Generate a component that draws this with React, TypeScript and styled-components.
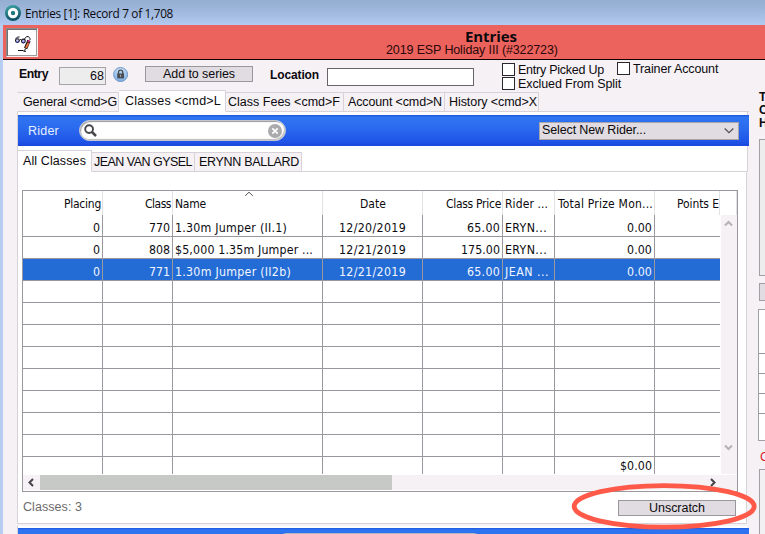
import React from 'react';
import styled, { createGlobalStyle, css } from 'styled-components';

const ARIAL = '"Liberation Sans", Arial, sans-serif';
const TAHOMA = '"DejaVu Sans Condensed", "DejaVu Sans", Tahoma, sans-serif';
const SEGOE = '"Open Sans", "Noto Sans", sans-serif';

const Global = createGlobalStyle`
  * { box-sizing: border-box; }
  html, body { margin: 0; padding: 0; overflow: hidden; }
  body { font-family: ${ARIAL}; font-size: 12.5px; color: #0c0a0e; }
`;

/* Labels are tracked so that each one occupies its designed width. */
const pen = document.createElement('canvas').getContext('2d')!;
const tracking = (text: string, font: string, width: number) => {
  pen.font = font;
  return (width - pen.measureText(text).width) / text.length;
};

const LabelText = styled.span<{ $ls: number; $size: number; $family: string; $bold: boolean; $color?: string; $drop: number }>`
  font-family: ${p => p.$family};
  font-size: ${p => p.$size}px;
  font-weight: ${p => (p.$bold ? 700 : 400)};
  letter-spacing: ${p => p.$ls.toFixed(3)}px;
  color: ${p => p.$color ?? 'inherit'};
  line-height: 13px;
  margin-top: ${p => p.$drop}px;
  margin-bottom: ${p => -p.$drop}px;
  white-space: pre;
  flex: none;
`;

type LabelProps = { text: string; w: number; size?: number; family?: string; bold?: boolean; color?: string; drop?: number };
const Label = ({ text, w, size = 12.5, family = ARIAL, bold = false, color, drop = 0 }: LabelProps) => (
  <LabelText
    $ls={tracking(text, `${bold ? 700 : 400} ${size}px ${family}`, w)}
    $size={size}
    $family={family}
    $bold={bold}
    $color={color}
    $drop={drop}
  >
    {text}
  </LabelText>
);

const Window = styled.div`
  position: relative;
  width: 765px;
  height: 534px;
  overflow: hidden;
  background: #b7cdf1;
`;
const TitleBar = styled.header`
  height: 25px;
  padding: 1px 0 0 5px;
  display: flex;
  align-items: center;
  gap: 4px;
  background: linear-gradient(#93aed1, #9fb8dc 45%, #b2caf1);
`;
const Body = styled.div`
  margin-left: 3px;
  height: 509px;
  background: #f5f1f5;
  display: flex;
  flex-direction: column;
`;
const Banner = styled.div`
  height: 35px;
  flex: none;
  display: flex;
  background: #ec625d;
  border-bottom: 1px solid #100000;
`;
const IconFrame = styled.div`
  flex: none;
  margin: 3px 0 0 3px;
  width: 32px;
  height: 29px;
  background: #fff;
  border: 1px solid #8d8d8d;
  border-right-color: #f4eeee;
  border-bottom-color: #f4eeee;
  box-shadow: inset 1px 1px #6f6f6f, inset -1px -1px #9b9b9b;
`;
const BannerText = styled.div`
  display: flex;
  flex-direction: column;
  margin-left: 348px;
  padding-top: 4px;
`;
const BannerLine = styled.div<{ $indent?: number }>`
  height: 14px;
  display: flex;
  align-items: center;
  padding-left: ${p => p.$indent ?? 0}px;
`;
const Columns = styled.div`
  flex: 1;
  display: flex;
  min-height: 0;
`;
const Main = styled.main`
  width: 746px;
  flex: none;
  padding-left: 14px;
`;
const FieldRow = styled.div`
  height: 30px;
  display: flex;
  align-items: flex-start;
  padding-left: 2px;
`;
const Slot = styled.div<{ $w: number; $top: number }>`
  width: ${p => p.$w}px;
  flex: none;
  padding-top: ${p => p.$top}px;
  display: flex;
`;
const Input = styled.div<{ $w: number; $muted?: boolean }>`
  width: ${p => p.$w}px;
  height: 18px;
  display: flex;
  align-items: center;
  justify-content: flex-end;
  padding: 0 1px 0 0;
  background: ${p => (p.$muted ? '#eeedee' : '#fff')};
  border: 1px solid ${p => (p.$muted ? '#a6a4a8' : '#67656a')};
`;
const Button = styled.div<{ $w: number }>`
  width: ${p => p.$w}px;
  height: 16px;
  display: flex;
  align-items: center;
  justify-content: center;
  background: #e0dce1;
  border: 1px solid #99979b;
`;
const Checks = styled.div`
  display: flex;
  flex-direction: column;
  gap: 1px;
`;
const Check = styled.div`
  height: 13px;
  display: flex;
  align-items: center;
  gap: 3px;
`;
const Box = styled.span`
  width: 13px;
  height: 13px;
  flex: none;
  background: #fff;
  border: 1px solid #29272b;
`;
const Tabs = styled.nav`
  height: 22px;
  display: flex;
  align-items: flex-end;
`;
const Tab = styled.div<{ $w: number; $pad: number; $active?: boolean; $first?: boolean }>`
  width: ${p => p.$w}px;
  height: ${p => (p.$active ? 22 : 20)}px;
  padding-left: ${p => p.$pad}px;
  padding-bottom: ${p => (p.$active ? 1 : 0)}px;
  display: flex;
  align-items: center;
  border: 1px solid #d6d2d8;
  border-left-width: ${p => (p.$first ? 1 : 0)}px;
  background: #f5f1f5;
  ${p => p.$first && !p.$active && css`border-left-color: #f5f1f5;`}
  ${p => p.$active && css`background: #fff; border-bottom-color: #fff;`}
`;
const TabFill = styled.div`
  flex: 1;
  height: 1px;
  background: #d6d2d8;
`;
const Panel = styled.section`
  width: 731px;
  height: 60px;
  background: #fff;
  border-left: 1px solid #d6d2d8;
  border-right: 1px solid #d6d2d8;
  padding-top: 3px;
`;
const BlueBar = styled.div`
  width: 731px;
  height: 31px;
  display: flex;
  align-items: center;
  padding: 0 10px 0 10px;
  background: linear-gradient(#174fd8 0, #2f75f1 2px, #2b6bef 40%, #1f55e8 85%, #1a48dc);
`;
const Search = styled.div`
  width: 207px;
  height: 21px;
  margin-left: 20px;
  margin-right: auto;
  border-radius: 11px;
  background: #fff;
  border: 1px solid #c3c6cf;
  box-shadow: inset 1px 1px 1px #999, inset -1px -1px 1px #bbb;
  display: flex;
  align-items: center;
  justify-content: space-between;
  padding: 0 3px 0 4px;
`;
const Select = styled.div`
  width: 200px;
  height: 18px;
  display: flex;
  align-items: center;
  justify-content: space-between;
  padding: 0 4px 1px 2px;
  background: #e0dce1;
  border: 1px solid #a7a5a9;
`;
const SubTabs = styled.div`
  margin-top: 4px;
  height: 22px;
  display: flex;
  align-items: flex-end;
`;
const ListPanel = styled.section`
  width: 730px;
  height: 352px;
  background: #fff;
  border: 1px solid #d6d2d8;
  border-top: 0;
  padding: 18px 8px 0 4px;
`;
const Table = styled.div`
  width: 716px;
  height: 302px;
  border: 1px solid #9a989e;
`;
const COLS = '80px 70px 150px 100px 80px 52px 100px 65px';
const Header = styled.div`
  position: relative;
  width: 714px;
  height: 24px;
  display: grid;
  grid-template-columns: ${COLS};
  border-right: 1px solid #e3e1e4;
`;
const Cell = styled.div<{ $align: string; $head?: boolean; $pad?: number; $top?: number }>`
  display: flex;
  align-items: center;
  justify-content: ${p => p.$align};
  min-width: 0;
  overflow: hidden;
  padding: ${p => p.$top ?? 5}px ${p => p.$pad ?? 2}px 0 2px;
  border-right: 1px solid ${p => (p.$head ? '#e3e1e4' : '#9a989e')};
  &:last-child { border-right: 0; }
`;
const SortMark = styled.svg`
  position: absolute;
  left: 221px;
  top: 0;
`;
const GridArea = styled.div`
  display: flex;
  height: 259px;
`;
const Rows = styled.div`
  width: 697px;
  margin-right: 1px;
  height: 259px;
  overflow: hidden;
`;
const Row = styled.div<{ $selected?: boolean; $last?: boolean }>`
  height: ${p => (p.$last ? 17 : 22)}px;
  display: grid;
  grid-template-columns: ${COLS};
  border-bottom: ${p => (p.$last ? 0 : 1)}px solid #9a989e;
  background: ${p => (p.$selected ? '#236cd6' : '#fff')};
  color: ${p => (p.$selected ? '#f2f6ff' : '#0b0b10')};
`;
const VScroll = styled.div`
  width: 16px;
  background: #f5f1f5;
  display: flex;
  flex-direction: column;
  align-items: center;
  justify-content: space-between;
  padding: 5px 1px 23px 0;
`;
const HScroll = styled.div`
  height: 17px;
  padding: 1px 0;
  display: flex;
  align-items: center;
  background: #fff;
`;
const HTrack = styled.div`
  height: 15px;
  flex: 1;
  display: flex;
  align-items: center;
  background: #f5f1f5;
`;
const Thumb = styled.div`
  width: 352px;
  height: 15px;
  margin-left: 4px;
  margin-right: auto;
  background: #c7c9c6;
`;
const Footer = styled.div`
  height: 30px;
  display: flex;
  justify-content: space-between;
  align-items: flex-start;
  padding: 8px 2px 0 1px;
`;
const LowerPanel = styled.div`
  width: 730px;
  margin-top: 2px;
  height: 9px;
  border-left: 1px solid #d6d2d8;
  padding-top: 2px;
  background: #fff;
`;
const LowerBar = styled.div`
  width: 731px;
  height: 8px;
  padding-top: 5px;
  background: linear-gradient(#1f57e4 0, #2f75f1 2px, #2d70f0);
`;
const LowerSearch = styled.div`
  margin-left: 259px;
  width: 206px;
  height: 20px;
  border-radius: 10px;
  background: #e8eaf0;
  border: 1px solid #b4b7c0;
`;
const Side = styled.aside`
  flex: 1;
  padding: 31px 0 0 9px;
  overflow: hidden;
`;
const SidePanel = styled.div<{ $h: number; $gap: number; $bg: string; $out?: boolean }>`
  width: 30px;
  height: ${p => p.$h}px;
  margin-top: ${p => p.$gap}px;
  margin-left: ${p => (p.$out ? 0 : 1)}px;
  border: 1px solid #a19fa4;
  background: ${p => p.$bg};
  overflow: hidden;
`;
const SideRow = styled.div<{ $h: number }>`
  height: ${p => p.$h}px;
  border-bottom: 1px solid #9a989e;
`;
const SideLine = styled.div`
  height: 13px;
  padding-left: 1px;
  display: flex;
  align-items: center;
`;
const SideNote = styled.div`
  height: 16px;
  margin-top: 8px;
  padding-left: 2px;
  display: flex;
  align-items: center;
`;
const Callout = styled.svg`
  position: absolute;
  left: 568px;
  top: 480px;
`;

type ChevronProps = { d: string; c?: string; w?: number; h?: number; sw?: number };
const Chevron = ({ d, c = '#b4b2b6', w = 9, h = 7, sw = 2 }: ChevronProps) => (
  <svg width={w} height={h} viewBox={`0 0 ${w} ${h}`} fill="none" stroke={c} strokeWidth={sw}>
    <path d={d} />
  </svg>
);

const AppIcon = () => (
  <svg width="16" height="16" viewBox="0 0 16 16">
    <defs>
      <linearGradient id="teal" x1="0" y1="0" x2="0.3" y2="1">
        <stop offset="0" stopColor="#3fa9a8" />
        <stop offset="1" stopColor="#0d5364" />
      </linearGradient>
    </defs>
    <circle cx="8" cy="8" r="8" fill="url(#teal)" />
    <circle cx="8" cy="8" r="3.7" fill="none" stroke="#fff" strokeWidth="3" />
  </svg>
);

const GlassesPencil = () => (
  <svg width="30" height="27" viewBox="0 0 30 27" fill="none">
    <circle cx="10.4" cy="11.6" r="1.9" fill="#c4c7ff" stroke="#15151c" strokeWidth="1.1" />
    <circle cx="16.4" cy="12" r="1.9" fill="#b2b6fa" stroke="#15151c" strokeWidth="1.1" />
    <path d="M8.6 10 L10.5 8 L12.5 8 M12.3 11.5 L13.4 10.4 L14.5 11.5 M17.5 10 L19.5 7.6 L21.5 7.6 L23 9.5 V11" stroke="#15151c" strokeWidth="1" />
    <path d="M9.4 13.3 H11.4 M15.4 13.7 H17.4" stroke="#3038c0" strokeWidth="0.9" />
    <path d="M22 11.5 L18.6 19.5" stroke="#1a1212" strokeWidth="3.4" />
    <path d="M21.4 14 L19 18.8" stroke="#ec7540" strokeWidth="1.9" />
    <circle cx="21.8" cy="12.2" r="1.2" fill="#c03080" />
    <path d="M17.6 21.8 L18.4 19.5 M11 21.5 H16.5 M16.5 22.3 H19" stroke="#111" strokeWidth="1" />
  </svg>
);

const Lock = () => (
  <svg width="16" height="16" viewBox="0 0 16 16">
    <defs>
      <linearGradient id="sky" x1="0" y1="0" x2="0" y2="1">
        <stop offset="0" stopColor="#c4ddf4" />
        <stop offset="1" stopColor="#7cafe4" />
      </linearGradient>
    </defs>
    <circle cx="7.6" cy="7.5" r="7" fill="url(#sky)" stroke="#6c94c9" />
    <path d="M5.5 7 V5.3 a2.1 2.1 0 0 1 4.2 0 V7" fill="none" stroke="#4b4c52" strokeWidth="1.3" />
    <rect x="4.2" y="6.5" width="6.8" height="4.9" fill="#4b4c52" />
    <rect x="7.1" y="7.8" width="1" height="2" fill="#a9b6c8" />
  </svg>
);

const Magnifier = () => (
  <svg width="13" height="13" viewBox="0 0 13 13" fill="none" stroke="#47474b">
    <circle cx="5.1" cy="5.1" r="3.9" strokeWidth="1.9" />
    <path d="M8 8 L12 12" strokeWidth="2.5" />
  </svg>
);

const Clear = () => (
  <svg width="14" height="14" viewBox="0 0 14 14">
    <circle cx="7" cy="7" r="7" fill="#aaaaac" />
    <path d="M4.3 4.3 L9.7 9.7 M9.7 4.3 L4.3 9.7" stroke="#fff" strokeWidth="1.7" />
  </svg>
);

type Item = [string, number];
const aligns = ['flex-end', 'flex-end', 'flex-start', 'center', 'flex-end', 'flex-start', 'flex-end', 'flex-end'];
const headers: Item[] = [
  ['Placing', 37], ['Class', 26], ['Name', 31], ['Date', 26],
  ['Class Price', 55], ['Rider ...', 43], ['Total Prize Mon...', 95], ['Points E', 42],
];
const rows: { cells: Item[]; selected?: boolean }[] = [
  { cells: [['0', 7], ['770', 21], ['1.30m Jumper (II.1)', 112], ['12/20/2019', 67], ['65.00', 33], ['ERYN...', 42], ['0.00', 25]] },
  { cells: [['0', 7], ['808', 21], ['$5,000 1.35m Jumper ...', 138], ['12/21/2019', 67], ['175.00', 39], ['ERYN...', 42], ['0.00', 25]] },
  { cells: [['0', 7], ['771', 21], ['1.30m Jumper (II2b)', 116], ['12/21/2019', 67], ['65.00', 33], ['JEAN ...', 44], ['0.00', 25]], selected: true },
];
const totals: (Item | undefined)[] = [undefined, undefined, undefined, undefined, undefined, undefined, ['$0.00', 32]];
const columnIndexes = aligns.map((_, i) => i);

const GridRow = ({ cells = [], selected, last }: { cells?: (Item | undefined)[]; selected?: boolean; last?: boolean }) => (
  <Row $selected={selected} $last={last}>
    {columnIndexes.map(i => (
      <Cell key={i} $align={aligns[i]} $top={last ? 1 : 5}>
        {cells[i] && <Label text={cells[i]![0]} w={cells[i]![1]} size={12.3} family={TAHOMA} />}
      </Cell>
    ))}
  </Row>
);

const App = () => (
  <>
    <Global />
    <Window>
      <TitleBar>
        <AppIcon />
        <Label text="Entries [1]: Record 7 of 1,708" w={148} size={11.8} family={SEGOE} />
      </TitleBar>
      <Body>
        <Banner>
          <IconFrame><GlassesPencil /></IconFrame>
          <BannerText>
            <BannerLine $indent={79}><Label text="Entries" w={52} size={15} family={SEGOE} bold /></BannerLine>
            <BannerLine><Label text="2019 ESP Holiday III (#322723)" w={172} color="#2a0808" /></BannerLine>
          </BannerText>
        </Banner>
        <Columns>
          <Main>
            <FieldRow>
              <Slot $w={40} $top={8}><Label text="Entry" w={29} size={12.3} bold /></Slot>
              <Slot $w={54} $top={7}><Input $w={47} $muted><Label text="68" w={14} /></Input></Slot>
              <Slot $w={32} $top={7}><Lock /></Slot>
              <Slot $w={125} $top={6}><Button $w={108}><Label text="Add to series" w={72} /></Button></Slot>
              <Slot $w={57} $top={9}><Label text="Location" w={49} size={12} bold /></Slot>
              <Slot $w={175} $top={8}><Input $w={147} /></Slot>
              <Slot $w={115} $top={3}>
                <Checks>
                  <Check><Box /><Label text="Entry Picked Up" w={86} drop={1} /></Check>
                  <Check><Box /><Label text="Exclued From Split" w={103} drop={1} /></Check>
                </Checks>
              </Slot>
              <Slot $w={110} $top={2}><Check><Box /><Label text="Trainer Account" w={86} drop={1} /></Check></Slot>
            </FieldRow>
            <Tabs>
              <Tab $w={102} $pad={5} $first><Label text="General <cmd>G" w={94} /></Tab>
              <Tab $w={107} $pad={6} $active><Label text="Classes <cmd>L" w={96} drop={1} /></Tab>
              <Tab $w={118} $pad={2}><Label text="Class Fees <cmd>F" w={112} /></Tab>
              <Tab $w={101} $pad={4}><Label text="Account <cmd>N" w={94} /></Tab>
              <Tab $w={94} $pad={4}><Label text="History <cmd>X" w={88} /></Tab>
              <TabFill />
            </Tabs>
            <Panel>
              <BlueBar>
                <Label text="Rider" w={31} color="#e6efff" drop={1} />
                <Search><Magnifier /><Clear /></Search>
                <Select>
                  <Label text="Select New Rider..." w={104} />
                  <Chevron d="M0.7 1.5 L5 5.7 L9.3 1.5" c="#555358" w={10} h={7} sw={1.3} />
                </Select>
              </BlueBar>
              <SubTabs>
                <Tab $w={74} $pad={5} $active><Label text="All Classes" w={63} drop={1} /></Tab>
                <Tab $w={103} $pad={2}><Label text="JEAN VAN GYSEL" w={98} /></Tab>
                <Tab $w={107} $pad={4}><Label text="ERYNN BALLARD" w={100} /></Tab>
                <TabFill />
              </SubTabs>
            </Panel>
            <ListPanel>
              <Table>
                <Header>
                  {headers.map(([text, w], i) => (
                    <Cell key={text} $head $align={aligns[i]} $pad={i === 7 ? 0 : 1} $top={2}>
                      <Label text={text} w={w} size={12} family={TAHOMA} />
                    </Cell>
                  ))}
                  <SortMark width="10" height="6" viewBox="0 0 10 6" fill="none" stroke="#555">
                    <path d="M1.2 4.8 L5 1.2 L8.8 4.8" />
                  </SortMark>
                </Header>
                <GridArea>
                  <Rows>
                    {rows.map((row, i) => <GridRow key={i} {...row} />)}
                    {Array.from({ length: 8 }, (_, i) => <GridRow key={i} />)}
                    <GridRow last cells={totals} />
                  </Rows>
                  <VScroll>
                    <Chevron d="M1 5.5 L4.5 2 L8 5.5" />
                    <Chevron d="M1 1.5 L4.5 5 L8 1.5" />
                  </VScroll>
                </GridArea>
                <HScroll>
                  <HTrack>
                    <Chevron d="M10 1 L6.5 4.5 L10 8" c="#454348" w={13} h={9} />
                    <Thumb />
                    <Chevron d="M1 1 L4.5 4.5 L1 8" c="#454348" w={27} h={9} />
                  </HTrack>
                </HScroll>
              </Table>
              <Footer>
                <Label text="Classes: 3" w={59} color="#6d6b6e" drop={1} />
                <Button $w={118}><Label text="Unscratch" w={56} /></Button>
              </Footer>
            </ListPanel>
            <LowerPanel><LowerBar><LowerSearch /></LowerBar></LowerPanel>
          </Main>
          <Side>
            <SideLine><Label text="T" w={6} size={12} bold /></SideLine>
            <SideLine><Label text="C" w={6} size={12} bold /></SideLine>
            <SideLine><Label text="H" w={6} size={12} bold /></SideLine>
            <SidePanel $h={137} $gap={9} $bg="#eeedee" />
            <SidePanel $h={18} $gap={7} $bg="#e0dce1" />
            <SidePanel $h={132} $gap={8} $bg="#fff" $out>
              <SideRow $h={44} />
              <SideRow $h={20} />
              <SideRow $h={20} />
              <SideRow $h={20} />
            </SidePanel>
            <SideNote><Label text="C" w={9} color="#d41a2a" /></SideNote>
            <SidePanel $h={70} $gap={4} $bg="#f3f0f3" />
          </Side>
        </Columns>
      </Body>
      <Callout width="192" height="53" viewBox="0 0 192 53" fill="none">
        <ellipse cx="96.2" cy="26.4" rx="90" ry="20.8" stroke="#ff5a49" strokeWidth="4.8" />
      </Callout>
    </Window>
  </>
);

export default App;
